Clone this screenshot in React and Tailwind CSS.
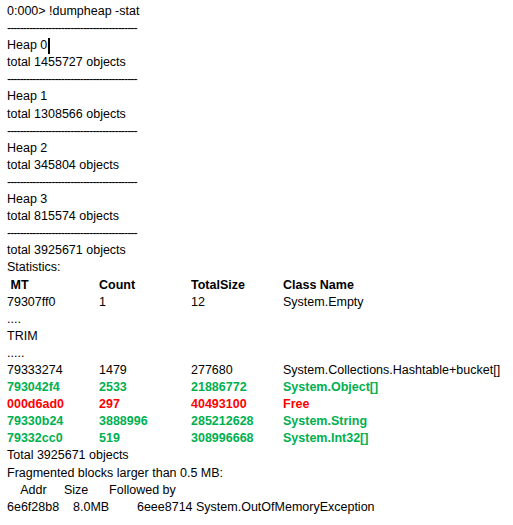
const green = "text-[#00b050] font-bold";
const red = "text-[#ff0000] font-bold";

const dash = "-----------------------------------------";

const rows = [
  { c: ["79333274", "1479", "277680", "System.Collections.Hashtable+bucket[]"], cls: "" },
  { c: ["793042f4", "2533", "21886772", "System.Object[]"], cls: green },
  { c: ["000d6ad0", "297", "40493100", "Free"], cls: red },
  { c: ["79330b24", "3888996", "285212628", "System.String"], cls: green },
  { c: ["79332cc0", "519", "308996668", "System.Int32[]"], cls: green },
];

function Row({ c, cls = "" }) {
  return (
    <div className={`grid grid-cols-[92px_92px_92px_1fr] whitespace-nowrap ${cls}`}>
      {c.map((t, i) => (
        <span key={i}>{t}</span>
      ))}
    </div>
  );
}

export default function App() {
  return (
    <div
      className="bg-white text-black w-[513px] h-[525px] pt-[3px] pl-[7px] text-[12.5px] leading-[17.1px] overflow-hidden"
      style={{ fontFamily: '"Liberation Sans", Arial, sans-serif' }}
    >
      <div>0:000&gt; !dumpheap -stat</div>
      <div className="tracking-[-1px]">{dash}</div>
      <div className="flex items-center">
        Heap 0<span className="inline-block w-[2px] h-[16px] bg-black ml-[1px]" />
      </div>
      <div>total 1455727 objects</div>
      {[["1", "1308566"], ["2", "345804"], ["3", "815574"]].map(([h, n]) => (
        <div key={h}>
          <div className="tracking-[-1px]">{dash}</div>
          <div>Heap {h}</div>
          <div>total {n} objects</div>
        </div>
      ))}
      <div className="tracking-[-1px]">{dash}</div>
      <div>total 3925671 objects</div>
      <div>Statistics:</div>
      <Row c={["\u00a0MT", "Count", "TotalSize", "Class Name"]} cls="font-bold" />
      <Row c={["79307ff0", "1", "12", "System.Empty"]} />
      <div>....</div>
      <div>TRIM</div>
      <div>.....</div>
      {rows.map((r, i) => (
        <Row key={i} c={r.c} cls={r.cls} />
      ))}
      <div>Total 3925671 objects</div>
      <div>Fragmented blocks larger than 0.5 MB:</div>
      <div className="whitespace-pre">    Addr     Size      Followed by</div>
      <div className="whitespace-pre">6e6f28b8    8.0MB        6eee8714 System.OutOfMemoryException</div>
    </div>
  );
}
